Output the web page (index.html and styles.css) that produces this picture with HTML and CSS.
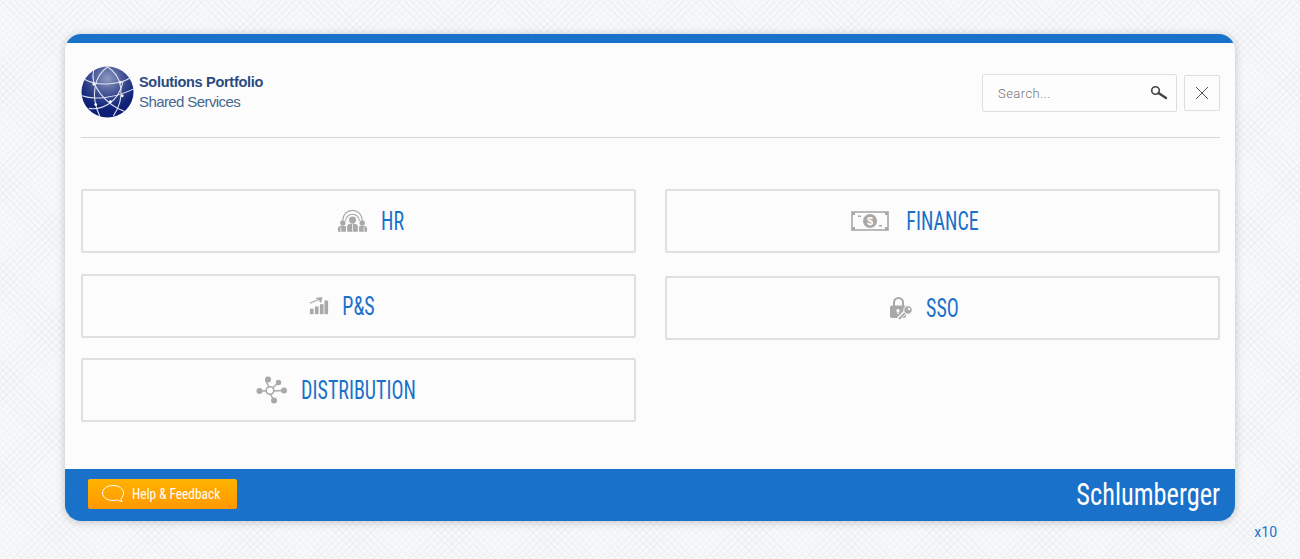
FILE: index.html
```html
<!DOCTYPE html>
<html lang="en">
  <head>
    <meta charset="UTF-8" />
    <meta name="viewport" content="width=device-width, initial-scale=1.0" />
    <title>Solutions Portfolio</title>
    <link rel="stylesheet" href="styles.css">
  </head>
  <body>
    <div class="card">
      <div class="card-top"></div>
      <div class="card-body">
        <div class="header">
          <div class="logo">
            <svg class="globe" width="53" height="52" viewBox="0 0 54 54" preserveAspectRatio="none">
              <defs>
                <radialGradient id="globeFill" cx="50%" cy="24%" r="72%">
                  <stop offset="0" stop-color="#8f9ac0" />
                  <stop offset="0.45" stop-color="#3f4f92" />
                  <stop offset="0.8" stop-color="#0f2277" />
                  <stop offset="1" stop-color="#0c1f74" />
                </radialGradient>
              </defs>
              <circle cx="27" cy="27" r="26.5" fill="url(#globeFill)" />
              <g fill="none" stroke="#dfe4f0" stroke-width="1.1">
                <path d="M27 1C14 10 9 30 19 52" />
                <path d="M27 1C42 10 46 32 33 52" />
                <path d="M4 14C16 21 38 20 51 12" />
                <path d="M1 31C14 36 38 32 53 24" />
                <path d="M13 4C8 20 26 40 44 47" />
                <path d="M8 44C22 46 38 38 43 16" />
              </g>
              <g fill="#fff">
                <circle cx="13" cy="19" r="1.4" />
                <circle cx="40" cy="17" r="1.4" />
                <circle cx="15" cy="40" r="1.4" />
                <circle cx="30" cy="37" r="1.4" />
                <circle cx="42" cy="31" r="1.4" />
              </g>
            </svg>
            <div class="logo-text">
              <div class="logo-title">Solutions Portfolio</div>
              <div class="logo-sub">Shared Services</div>
            </div>
          </div>
          <div class="tools">
            <div class="search">
              <span class="search-text">Search...</span>
              <svg width="18" height="16" viewBox="0 0 18 16">
                <circle cx="5.5" cy="5.5" r="3.8" fill="none" stroke="#444" stroke-width="1.6" />
                <path d="M8.5 8l7.5 5" stroke="#444" stroke-width="2.4" stroke-linecap="round" />
              </svg>
            </div>
            <div class="close">
              <svg width="14" height="14" viewBox="0 0 14 14">
                <path d="M1 1l12 12M13 1L1 13" stroke="#555" stroke-width="1" />
              </svg>
            </div>
          </div>
        </div>

        <div class="menu">
          <div class="menu-col">
            <a class="menu-btn shift-right">
              <svg class="btn-icon" width="31" height="24" viewBox="0 0 32 24">
                <g fill="none" stroke="#a8a8a8" stroke-width="1.2">
                  <path d="M6 11a10 10 0 0 1 20 0" />
                  <path d="M9 12a7 7 0 0 1 14 0" />
                </g>
                <g fill="#a8a8a8">
                  <circle cx="16" cy="11" r="3.6" />
                  <circle cx="6" cy="14" r="2.8" />
                  <circle cx="26" cy="14" r="2.8" />
                  <path d="M10.500 23v-5.500c0-2 2.500-2.800 5.500-2.800s5.500 .8 5.500 2.800V23z" />
                  <path d="M1 23v-3.500c0-1.800 2-2.600 5-2.600 1.400 0 2.300 .2 3.200 .5V23z" />
                  <path d="M31 23v-3.500c0-1.800-2-2.600-5-2.600-1.400 0-2.300 .2-3.200 .5V23z" />
                </g>
                <path d="M16 15v8M4 18.500v4.500M28 18.500v4.500" stroke="#fcfcfc" stroke-width="0.8" />
              </svg>
              <span class="btn-text">HR</span>
            </a>
            <a class="menu-btn">
              <svg class="btn-icon" width="20" height="20" viewBox="0 0 22 20">
                <path d="M1 7l9-4M10 3l-1.500-1.500L14 1l-1 4.500L11.500 4" fill="#a8a8a8" stroke="#a8a8a8" stroke-width="1.200" />
                <g fill="#a8a8a8">
                  <rect x="1" y="13" width="4" height="6" />
                  <rect x="6.500" y="10.500" width="4" height="8.500" />
                  <rect x="12" y="8" width="4" height="11" />
                  <rect x="17" y="4" width="4" height="15" />
                </g>
              </svg>
              <span class="btn-text">P&amp;S</span>
            </a>
            <a class="menu-btn">
              <svg class="btn-icon" width="32" height="28" viewBox="0 0 32 28">
                <g stroke="#a8a8a8" stroke-width="1.500">
                  <path d="M13.500 12L10 5M16.500 12L22 7M17 15L27 14.500M11 15H4M14 17l3.500 7" />
                </g>
                <circle cx="14" cy="14.500" r="3.800" fill="#fff" stroke="#a8a8a8" stroke-width="1.600" />
                <g fill="#a8a8a8">
                  <circle cx="12" cy="3.500" r="3" />
                  <circle cx="22.500" cy="6.500" r="2.700" />
                  <circle cx="28" cy="14.500" r="3" />
                  <circle cx="3.500" cy="15" r="3" />
                  <circle cx="18" cy="24.500" r="3" />
                </g>
              </svg>
              <span class="btn-text">DISTRIBUTION</span>
            </a>
          </div>
          <div class="menu-col right">
            <a class="menu-btn">
              <svg class="btn-icon ico-money" width="38" height="20" viewBox="0 0 38 20">
                <rect x="1" y="1" width="36" height="18" fill="none" stroke="#a8a8a8" stroke-width="1.600" />
                <circle cx="19" cy="10" r="7" fill="#a8a8a8" />
                <text x="19" y="14" class="dollar">$</text>
                <g fill="#a8a8a8">
                  <rect x="1" y="1" width="3" height="3" />
                  <rect x="34" y="1" width="3" height="3" />
                  <rect x="1" y="16" width="3" height="3" />
                  <rect x="34" y="16" width="3" height="3" />
                  <rect x="7" y="4.500" width="3" height="1.500" />
                  <rect x="28" y="14" width="3" height="1.500" />
                </g>
              </svg>
              <span class="btn-text">FINANCE</span>
            </a>
            <a class="menu-btn">
              <svg class="btn-icon" width="24" height="24" viewBox="0 0 24 24">
                <path d="M5 10V6.500a4.500 4.500 0 0 1 9 0V10" fill="none" stroke="#a8a8a8" stroke-width="2" />
                <rect x="1" y="9.500" width="16" height="12.500" rx="2" fill="#a8a8a8" />
                <circle cx="9" cy="14.500" r="1.600" fill="#fff" />
                <path d="M9 15v3" stroke="#fff" stroke-width="1.200" />
                <path d="M9.500 23l7-7" stroke="#fcfcfc" stroke-width="4" />
                <path d="M10 23l7-7" stroke="#a8a8a8" stroke-width="1.800" />
                <circle cx="19" cy="14" r="4.200" fill="#a8a8a8" stroke="#fcfcfc" />
                <circle cx="20" cy="13" r="1.200" fill="#fcfcfc" />
              </svg>
              <span class="btn-text">SSO</span>
            </a>
          </div>
        </div>
      </div>

      <div class="footer">
        <a class="help-btn">
          <svg width="24" height="20" viewBox="0 0 24 20">
            <path d="M12 1.500C6 1.500 1.500 4.800 1.500 9s4.500 7.500 10.500 7.500c1.600 0 3-.2 4.300-.6 1.200 .8 3 1.500 4.700 1.700-.6-1-1-2-1.100-3.200 1.700-1.400 2.600-3.300 2.600-5.400 0-4.200-4.500-7.500-10.500-7.500z" fill="none" stroke="#fff" stroke-width="1" />
          </svg>
          <span class="help-text">Help &amp; Feedback</span>
        </a>
        <div class="brand">Schlumberger</div>
      </div>
    </div>
    <div class="zoom-tag">x10</div>
  </body>
</html>
```
FILE: styles.css
```css
html {
  height: 100%;
}
body {
  margin: 0;
  height: 559px;
  overflow: hidden;
  box-sizing: border-box;
  padding: 34px 65px 0;
  font-family: Roboto, sans-serif;
  background-color: #f7f8fa;
  background-image:
    repeating-linear-gradient(45deg, rgba(220, 224, 230, 0.3) 0, rgba(220, 224, 230, 0.3) 1px, transparent 1px, transparent 5px),
    repeating-linear-gradient(-45deg, rgba(220, 224, 230, 0.3) 0, rgba(220, 224, 230, 0.3) 1px, transparent 1px, transparent 5px);
}
.card {
  width: 1170px;
  height: 487px;
  display: flex;
  flex-direction: column;
  border-radius: 16px;
  background: #fcfcfc;
  box-shadow: 0px 1px 8px rgba(0, 0, 0, 0.22);
  overflow: hidden;
}
.card-top {
  height: 9px;
  background: #1a71c9;
}
.card-body {
  flex: 1;
  padding: 0 15px 0 16px;
}
.header {
  height: 94px;
  display: flex;
  justify-content: space-between;
  align-items: flex-start;
  border-bottom: 1px solid #d6d6d6;
}
.logo {
  display: flex;
  align-items: center;
  gap: 5px;
  margin-top: 23px;
}
.globe {
  display: block;
}
.logo-title {
  font-family: "Liberation Sans", sans-serif;
  font-size: 14.5px;
  font-weight: bold;
  letter-spacing: -0.3px;
  color: #2a4a80;
  line-height: 19px;
}
.logo-sub {
  font-family: "Liberation Sans", sans-serif;
  font-size: 15px;
  letter-spacing: -0.6px;
  color: #47688f;
  line-height: 20px;
}
.tools {
  display: flex;
  align-items: center;
  gap: 7px;
  margin-top: 31px;
}
.search {
  width: 195px;
  height: 38px;
  box-sizing: border-box;
  display: flex;
  align-items: center;
  justify-content: space-between;
  padding: 0 8px 0 15px;
  border: 1px solid #dedede;
  border-radius: 2px;
  background: #fdfdfd;
}
.search-text {
  font-size: 13px;
  font-weight: 300;
  color: #757575;
  letter-spacing: 0.45px;
}
.close {
  width: 36px;
  height: 36px;
  box-sizing: border-box;
  display: flex;
  align-items: center;
  justify-content: center;
  border: 1px solid #dedede;
  border-radius: 2px;
}
.menu {
  display: grid;
  grid-template-columns: 555px 555px;
  column-gap: 29px;
  margin-top: 51px;
}
.menu-col {
  display: flex;
  flex-direction: column;
  gap: 20.5px;
}
.menu-col.right {
  gap: 23px;
}
/* label stays centred, icon hangs off its left */
.menu-btn {
  height: 64px;
  box-sizing: border-box;
  display: grid;
  grid-template-columns: 1fr auto 1fr;
  align-items: center;
  border: 2px solid #dfdfdf;
  border-radius: 2px;
  font-family: Roboto, sans-serif;
  font-stretch: 75%;
  font-size: 20px;
  color: #1a71c9;
}
.menu-btn.shift-right {
  padding-left: 68px;
}
.btn-text {
  transform: scaleY(1.3);
}
.btn-icon {
  justify-self: end;
  margin-right: 13px;
}
.ico-money {
  margin-right: 17px;
}
.dollar {
  font-family: "Liberation Sans", sans-serif;
  font-size: 11px;
  font-weight: bold;
  fill: #fff;
  text-anchor: middle;
}
.footer {
  height: 52px;
  box-sizing: border-box;
  display: flex;
  align-items: center;
  justify-content: space-between;
  padding: 0 15px 2px 23px;
  background: #1a71c9;
}
.help-btn {
  width: 149px;
  height: 30px;
  box-sizing: border-box;
  display: flex;
  align-items: center;
  gap: 7px;
  padding-left: 13px;
  border-radius: 2px;
  background: linear-gradient(#ffb300, #ff9800);
  font-family: Roboto, sans-serif;
  font-stretch: 75%;
  font-size: 15px;
  color: #fff;
}
.help-text {
  white-space: nowrap;
  transform: scaleX(0.89);
  transform-origin: left center;
}
.brand {
  font-family: Roboto, sans-serif;
  font-stretch: 75%;
  font-size: 31px;
  color: #fff;
  transform: scaleX(0.85);
  transform-origin: right center;
}
.zoom-tag {
  margin-top: 3px;
  margin-right: -42px;
  text-align: right;
  font-size: 14px;
  color: #1a71c9;
}
```
